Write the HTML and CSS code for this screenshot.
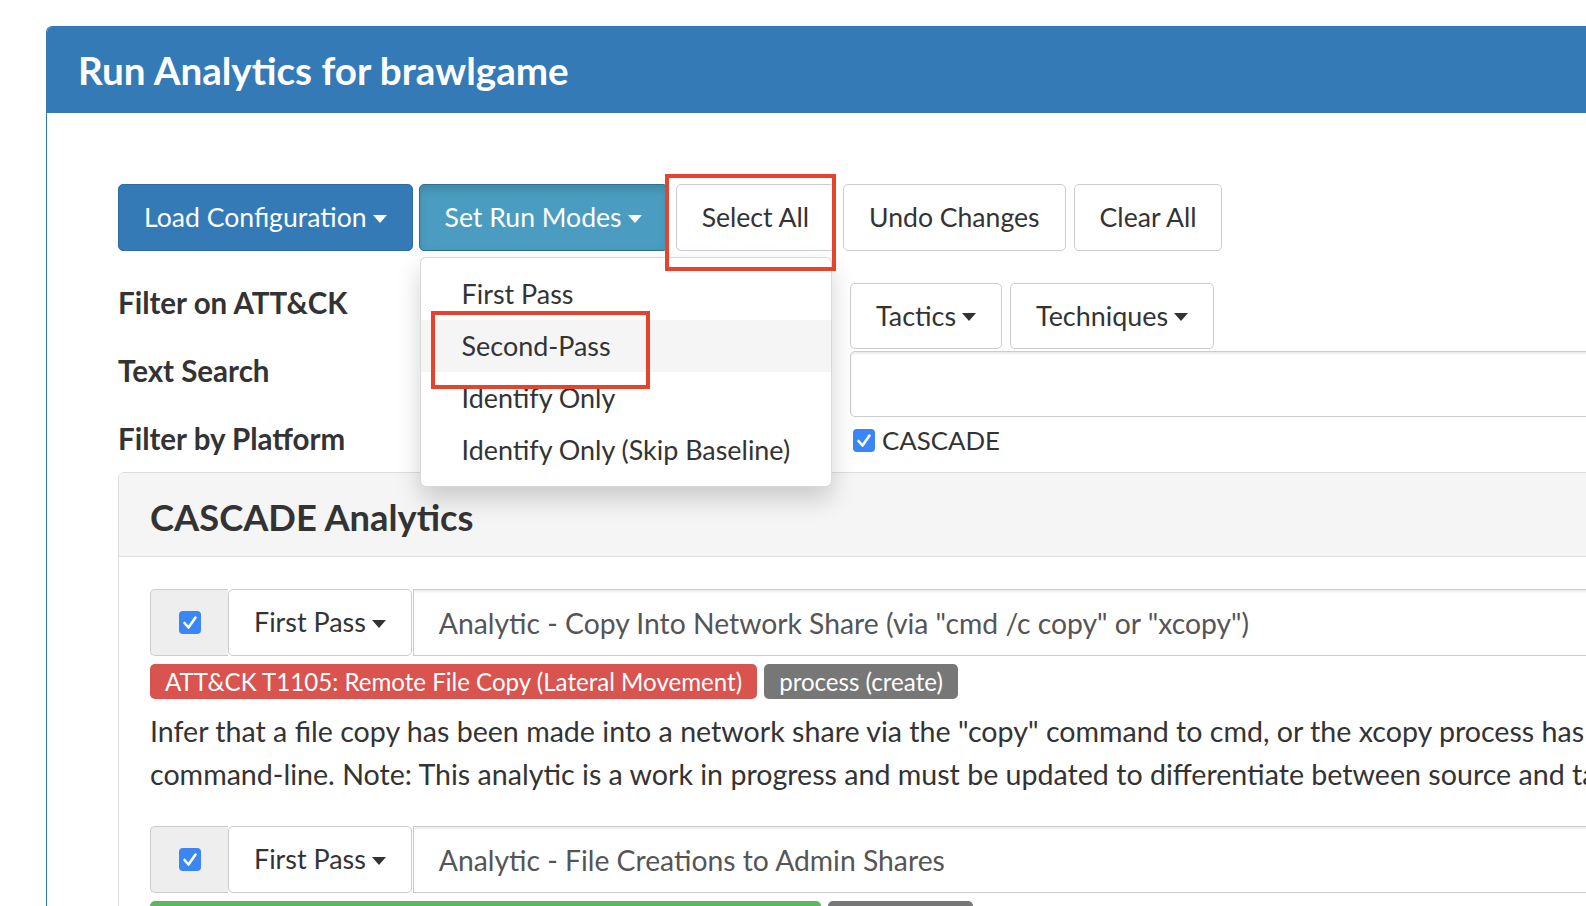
FILE: index.html
```html
<!DOCTYPE html>
<html lang="en">
<head>
<meta charset="utf-8">
<title>Run Analytics for brawlgame</title>
<link rel="stylesheet" href="styles.css">
</head>
<body>
<div class="page">
  <div class="panel">
    <div class="panel-heading">
      <h1 class="panel-title">Run Analytics for brawlgame</h1>
    </div>
    <div class="panel-body">
      <div class="toolbar">
        <button class="btn btn-primary">Load Configuration<span class="caret"></span></button>
        <div class="dropdown">
          <button class="btn btn-info">Set Run Modes<span class="caret"></span></button>
          <ul class="dropdown-menu">
            <li>First Pass</li>
            <li class="is-hover">Second-Pass</li>
            <li>Identify Only</li>
            <li>Identify Only (Skip Baseline)</li>
          </ul>
        </div>
        <button class="btn btn-default">Select All</button>
        <button class="btn btn-default">Undo Changes</button>
        <button class="btn btn-default">Clear All</button>
      </div>

      <div class="filters">
        <div class="filter-label">Filter on ATT&amp;CK</div>
        <div class="filter-controls">
          <button class="btn btn-default">Tactics<span class="caret"></span></button>
          <button class="btn btn-default">Techniques<span class="caret"></span></button>
        </div>
        <div class="filter-label">Text Search</div>
        <div class="filter-controls">
          <div class="form-control"></div>
        </div>
        <div class="filter-label">Filter by Platform</div>
        <div class="platform">
          <span class="check"><svg viewBox="0 0 22 23" width="22" height="23"><rect x="0" y="0" width="22" height="23" rx="4" fill="#3a86f6"/><path d="M5.5 12 L9.5 16.5 L16.5 6.5" fill="none" stroke="#fff" stroke-width="2.6" stroke-linecap="round" stroke-linejoin="round"/></svg></span>
          <span>CASCADE</span>
        </div>
      </div>

      <div class="sub-panel">
        <div class="sub-heading">
          <h2 class="sub-title">CASCADE Analytics</h2>
        </div>
        <div class="sub-body">
          <div class="analytic">
            <div class="input-group">
              <div class="ig-addon"><svg viewBox="0 0 22 23" width="22" height="23"><rect x="0" y="0" width="22" height="23" rx="4" fill="#3a86f6"/><path d="M5.5 12 L9.5 16.5 L16.5 6.5" fill="none" stroke="#fff" stroke-width="2.6" stroke-linecap="round" stroke-linejoin="round"/></svg></div>
              <button class="btn btn-default ig-btn">First Pass<span class="caret"></span></button>
              <div class="ig-input">Analytic - Copy Into Network Share (via "cmd /c copy" or "xcopy")</div>
            </div>
            <div class="tags">
              <span class="tag tag-danger">ATT&amp;CK T1105: Remote File Copy (Lateral Movement)</span>
              <span class="tag tag-muted">process (create)</span>
            </div>
            <p class="desc">Infer that a file copy has been made into a network share via the "copy" command to cmd, or the xcopy process has been run with a network share on the<br>command-line. Note: This analytic is a work in progress and must be updated to differentiate between source and target files.</p>
          </div>
          <div class="analytic">
            <div class="input-group">
              <div class="ig-addon"><svg viewBox="0 0 22 23" width="22" height="23"><rect x="0" y="0" width="22" height="23" rx="4" fill="#3a86f6"/><path d="M5.5 12 L9.5 16.5 L16.5 6.5" fill="none" stroke="#fff" stroke-width="2.6" stroke-linecap="round" stroke-linejoin="round"/></svg></div>
              <button class="btn btn-default ig-btn">First Pass<span class="caret"></span></button>
              <div class="ig-input">Analytic - File Creations to Admin Shares</div>
            </div>
            <div class="tags">
              <span class="tag tag-success">ATT&amp;CK T1077: Windows Admin Shares (Lateral Movement)</span>
              <span class="tag tag-muted">file (create)</span>
            </div>
          </div>
        </div>
      </div>
    </div>
  </div>
  <div class="annot annot-select"></div>
  <div class="annot annot-second"></div>
</div>
</body>
</html>
```

FILE: styles.css
```css
html, body {
  margin: 0;
  padding: 0;
}
body {
  overflow: hidden;
  background: #fff;
  font-family: Lato, "Liberation Sans", sans-serif;
  color: #333;
  width: 1586px;
  height: 906px;
}
.page {
  position: relative;
  padding: 26px 0 0 46px;
  height: 906px;
  box-sizing: border-box;
}
.panel {
  width: 1900px;
  height: 100%;
  border: 1px solid #337ab7;
  border-bottom: 0;
  border-radius: 6px 6px 0 0;
  box-sizing: border-box;
}
.panel-heading {
  background: #337ab7;
  height: 86px;
  padding: 0 31px;
  display: flex;
  align-items: center;
  border-radius: 5px 5px 0 0;
}
.panel-title {
  margin: 0;
  font-size: 38.6px;
  font-weight: 700;
  line-height: 1.2;
  color: #fff;
}
.panel-body {
  padding: 71px 0 0 71px;
}

/* buttons */
.toolbar {
  display: flex;
  gap: 8px;
}
.toolbar > .btn-primary {
  margin-right: -2px;
}
.btn {
  height: 67px;
  box-sizing: border-box;
  padding: 0 25px;
  border: 1px solid #ccc;
  border-radius: 5px;
  background: #fff;
  font-family: inherit;
  font-size: 26.6px;
  font-weight: 400;
  color: #333;
  display: inline-flex;
  align-items: center;
  line-height: 1;
  white-space: nowrap;
}
.caret {
  display: inline-block;
  width: 0;
  height: 0;
  border-top: 8px solid currentColor;
  border-left: 7.5px solid transparent;
  border-right: 7.5px solid transparent;
  margin-left: 6px;
  margin-top: 2px;
}
.btn-primary {
  background: #337ab7;
  border-color: #2e6da4;
  color: #fff;
}
.btn-info {
  background: #4a9dc0;
  border-color: #2f7090;
  color: #fff;
  box-shadow: inset 0 5px 9px rgba(0, 0, 0, 0.13);
}

/* dropdown */
.dropdown {
  position: relative;
}
.dropdown-menu {
  position: absolute;
  top: calc(100% + 6px);
  left: 1px;
  z-index: 10;
  margin: 0;
  padding: 10px 0;
  list-style: none;
  background: #fff;
  border: 1px solid rgba(0, 0, 0, 0.15);
  border-radius: 6px;
  box-shadow: 0 12px 24px rgba(0, 0, 0, 0.175);
  white-space: nowrap;
  font-size: 26.9px;
}
.dropdown-menu li {
  line-height: 52px;
  padding: 0 41px;
  color: #333;
}
.dropdown-menu li.is-hover {
  background: #f5f5f5;
}

/* filters */
.filters {
  display: grid;
  grid-template-columns: 732px 1fr;
  row-gap: 2px;
  margin-top: 32px;
}
.filter-label {
  font-weight: 700;
  font-size: 29.5px;
  line-height: 37px;
  padding-top: 1px;
}
.filter-controls {
  display: flex;
  gap: 8px;
}
.filters .btn {
  height: 66px;
  font-size: 26.9px;
}
.form-control {
  flex: 1;
  height: 66px;
  box-sizing: border-box;
  border: 1px solid #ccc;
  border-radius: 5px;
  box-shadow: inset 0 2px 2px rgba(0, 0, 0, 0.075);
  background: #fff;
}
.platform {
  display: flex;
  align-items: center;
  gap: 7px;
  font-size: 25.8px;
  line-height: 37px;
  padding-top: 3px;
}
.check {
  display: flex;
  margin-left: 3px;
}

/* sub panel */
.sub-panel {
  margin-top: 13px;
  border: 1px solid #ddd;
  border-radius: 6px;
}
.sub-heading {
  background: #f5f5f5;
  border-bottom: 1px solid #ddd;
  padding: 23.5px 31px 19.5px;
  border-radius: 5px 5px 0 0;
}
.sub-title {
  margin: 0;
  font-size: 36.3px;
  font-weight: 700;
  line-height: 40px;
  color: #333;
}
.sub-body {
  padding: 32px 31px 0;
}
.input-group {
  display: flex;
  height: 67px;
}
.ig-addon {
  width: 78px;
  flex: none;
  box-sizing: border-box;
  background: #eee;
  border: 1px solid #ccc;
  border-right: 0;
  border-radius: 5px 0 0 5px;
  display: flex;
  align-items: center;
  justify-content: center;
}
.ig-btn {
  height: 67px;
  flex: none;
  font-size: 26.9px;
}
.ig-input {
  flex: 1;
  margin-left: 1px;
  box-sizing: border-box;
  border: 1px solid #ccc;
  box-shadow: inset 0 2px 2px rgba(0, 0, 0, 0.075);
  padding: 0 25px;
  display: flex;
  align-items: center;
  font-size: 28.3px;
  color: #555;
  white-space: nowrap;
}
.tags {
  display: flex;
  gap: 7px;
  margin-top: 8px;
}
.tag {
  height: 35px;
  padding: 0 15px;
  border-radius: 5px;
  color: #fff;
  font-size: 24.1px;
  display: flex;
  align-items: center;
  white-space: nowrap;
}
.tag-danger {
  background: #d9534f;
}
.tag-muted {
  background: #777;
}
.tag-success {
  background: #5cb85c;
}
.desc {
  margin: 11px 0 31px;
  font-size: 28.6px;
  line-height: 42.5px;
  white-space: nowrap;
  color: #333;
}

/* annotation boxes */
.annot {
  position: absolute;
  border: 4px solid #e5432d;
  box-sizing: border-box;
  z-index: 20;
}
.annot-select {
  left: 665px;
  top: 174px;
  width: 171px;
  height: 97px;
}
.annot-second {
  left: 431px;
  top: 311px;
  width: 219px;
  height: 78px;
}
```
